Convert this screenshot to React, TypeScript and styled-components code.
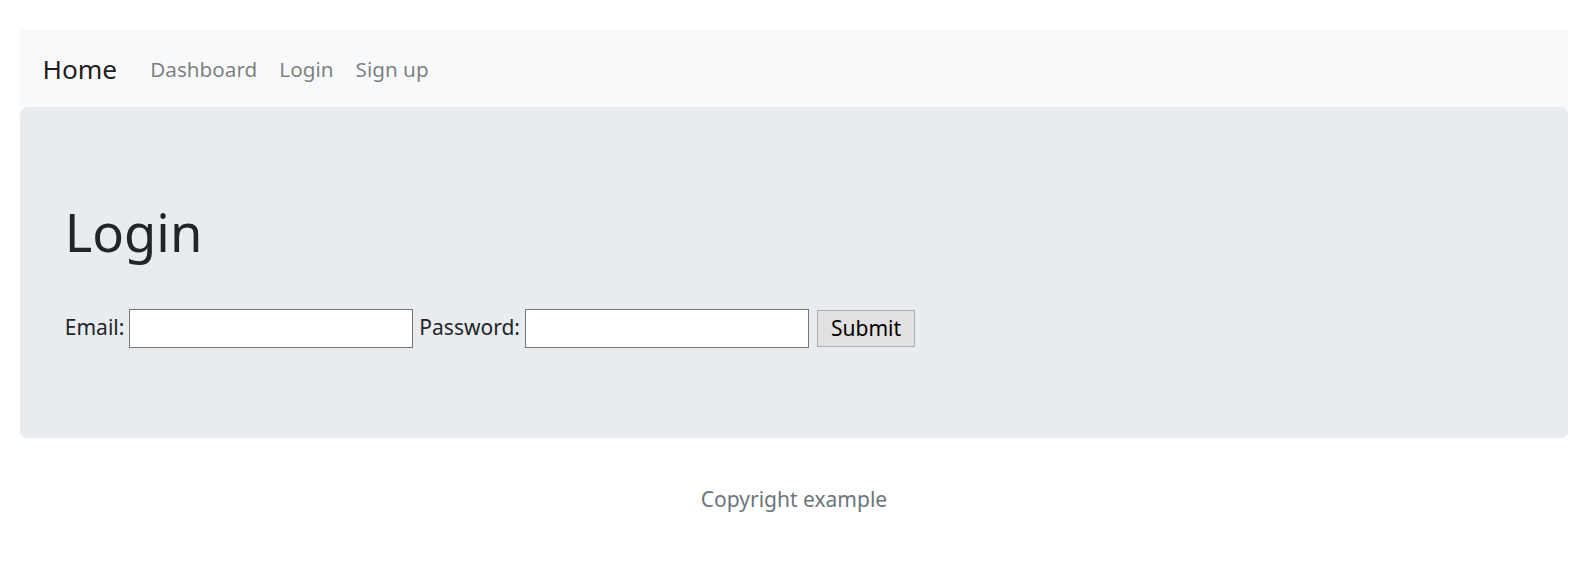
import React from 'react';
import styled, { createGlobalStyle } from 'styled-components';

const GlobalStyle = createGlobalStyle`
    body {
        margin: 0;
        background: #fff;
        color: #212529;
        font-family: 'Noto Sans', 'Open Sans', sans-serif;
        font-size: 21px;
        line-height: 33.6px;
    }
`;

const Page = styled.div`
    padding: 29px 21px 0 20px;
`;

const Navbar = styled.nav`
    box-sizing: border-box;
    display: flex;
    align-items: center;
    height: 78px;
    padding: 1px 22.4px 0;
    background-color: #f8f9fa;
`;

const Brand = styled.a`
    display: inline-block;
    margin-right: 22px;
    font-size: 26.3px;
    line-height: 42px;
    color: rgba(0, 0, 0, 0.9);
    text-decoration: none;
`;

const NavList = styled.div`
    display: flex;
    padding-top: 2px;
`;

const NavLink = styled.a`
    padding: 0 11px;
    font-size: 20.7px;
    color: rgba(0, 0, 0, 0.5);
    text-decoration: none;
`;

const Jumbotron = styled.div`
    padding: 91px 44.8px 90px;
    margin-bottom: 44.8px;
    background-color: #e9ecef;
    border-radius: 6.7px;
`;

const Title = styled.h1`
    margin: 0 0 43px;
    font-size: 52.5px;
    font-weight: 400;
    line-height: 67.2px;
`;

const Form = styled.form`
    display: flex;
    align-items: center;
    height: 40px;
`;

const Label = styled.label<{ $gap: number }>`
    margin-right: ${(p) => p.$gap}px;
`;

const Input = styled.input<{ $gap: number }>`
    box-sizing: border-box;
    width: 284px;
    height: 39px;
    margin: 0 ${(p) => p.$gap}px 0 0;
    padding: 0 4px;
    border: 1px solid #767676;
    background: #fff;
    font: inherit;
`;

const Button = styled.button`
    box-sizing: border-box;
    height: 37px;
    padding: 0 13px;
    border: 1px solid #adadad;
    border-radius: 0;
    background: #e1e1e1;
    color: #000;
    font: inherit;
    line-height: 1;
`;

const Footer = styled.footer`
    text-align: center;
    color: #6c757d;
`;

const App = () => (
    <>
        <GlobalStyle />
        <Page>
            <Navbar>
                <Brand href="#">Home</Brand>
                <NavList>
                    <NavLink href="#">Dashboard</NavLink>
                    <NavLink href="#">Login</NavLink>
                    <NavLink href="#">Sign up</NavLink>
                </NavList>
            </Navbar>
            <Jumbotron>
                <Title>Login</Title>
                <Form onSubmit={(e) => e.preventDefault()}>
                    <Label htmlFor="email" $gap={5}>Email:</Label>
                    <Input id="email" type="email" $gap={6} />
                    <Label htmlFor="password" $gap={5}>Password:</Label>
                    <Input id="password" type="password" $gap={8} />
                    <Button type="submit">Submit</Button>
                </Form>
            </Jumbotron>
            <Footer>Copyright example</Footer>
        </Page>
    </>
);

export default App;
